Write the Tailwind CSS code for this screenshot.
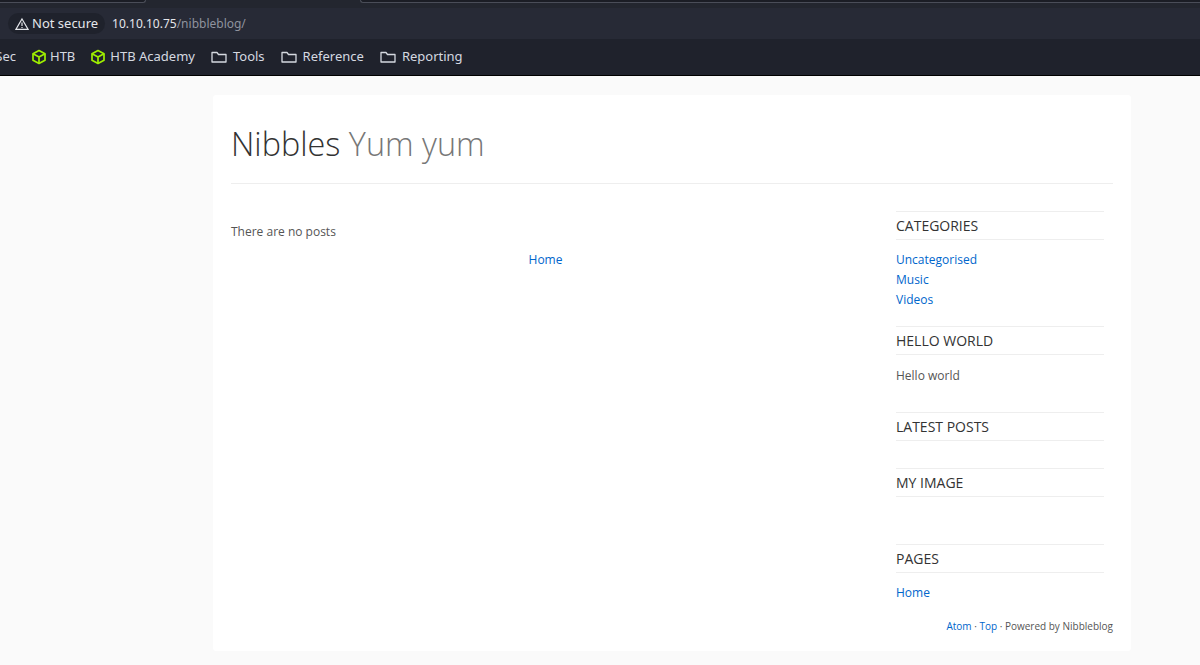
<!DOCTYPE html>
<html lang="en">
<head>
    <meta charset="UTF-8">
    <title>Nibbles - Yum yum</title>
    <script src="https://cdn.jsdelivr.net/npm/@tailwindcss/browser@4"></script>
</head>
<body class="h-[665px] overflow-hidden bg-[#fafafa] font-['Open_Sans',sans-serif]">
    <!-- browser chrome -->
    <div class="h-[76px] bg-[#1f222c] border-b border-black overflow-hidden font-['Noto_Sans',sans-serif]">
        <!-- tab strip, only the bottom edge of the tabs is in view -->
        <div class="h-[8px] bg-[#23262f] flex">
            <div class="w-[146px] h-[3px] bg-[#1b1d25] border-b border-r border-[#4a4d58] rounded-br-[6px]"></div>
            <div class="ml-[214px] flex-1 h-[3px] bg-[#1b1d25] border-b border-l border-[#4a4d58] rounded-bl-[6px]"></div>
        </div>
        <div class="h-[31px] bg-[#272a36] flex items-center pl-[8px]">
            <div class="h-[21px] rounded-full bg-[#1f222c] flex items-center gap-[3px] pl-[7px] pr-[7px] text-[13px] text-[#e4e6ea]">
                <svg class="w-[14px] h-[14px]" viewBox="0 0 14 14" fill="none" stroke="#e4e6ea" stroke-width="1.2"><path d="M7 2 L13 12.3 H1 Z"/><path d="M7 5.5 V9 M7 10 V11"/></svg>
                <span>Not secure</span>
            </div>
            <div class="ml-[7px] text-[12px] text-[#e4e6ea]">10.10.10.75<span class="text-[#8f939e]">/nibbleblog/</span></div>
        </div>
        <div class="h-[36px] flex items-center text-[13px] text-[#d5d9e0] whitespace-nowrap">
            <span class="w-[16px] flex justify-end overflow-hidden"><span>Sec</span></span>
            <svg class="ml-[15px] w-[16px] h-[16px]" viewBox="0 0 16 16" fill="none" stroke="#9fef00" stroke-width="1.7" stroke-linejoin="round"><path d="M8 1.5 L14 4.8 V11.2 L8 14.5 L2 11.2 V4.8 Z"/><path d="M2 4.8 L8 8 L14 4.8 M8 8 V14.5"/></svg>
            <span class="ml-[3px]">HTB</span>
            <svg class="ml-[15px] w-[16px] h-[16px]" viewBox="0 0 16 16" fill="none" stroke="#9fef00" stroke-width="1.7" stroke-linejoin="round"><path d="M8 1.5 L14 4.8 V11.2 L8 14.5 L2 11.2 V4.8 Z"/><path d="M2 4.8 L8 8 L14 4.8 M8 8 V14.5"/></svg>
            <span class="ml-[4px]">HTB Academy</span>
            <svg class="ml-[16px] w-[16px] h-[16px]" viewBox="0 0 16 16" fill="none" stroke="#d5d9e0" stroke-width="1.3" stroke-linejoin="round"><path d="M1 13 V3.5 H6 L7.5 5.5 H15 V13 Z"/></svg>
            <span class="ml-[6px]">Tools</span>
            <svg class="ml-[16px] w-[16px] h-[16px]" viewBox="0 0 16 16" fill="none" stroke="#d5d9e0" stroke-width="1.3" stroke-linejoin="round"><path d="M1 13 V3.5 H6 L7.5 5.5 H15 V13 Z"/></svg>
            <span class="ml-[6px]">Reference</span>
            <svg class="ml-[16px] w-[16px] h-[16px]" viewBox="0 0 16 16" fill="none" stroke="#d5d9e0" stroke-width="1.3" stroke-linejoin="round"><path d="M1 13 V3.5 H6 L7.5 5.5 H15 V13 Z"/></svg>
            <span class="ml-[6px]">Reporting</span>
        </div>
    </div>

    <!-- blog page -->
    <div class="ml-[213px] mt-[19px] w-[918px] h-[556px] bg-white rounded-[3px] px-[18px]">
        <header class="h-[89px] border-b border-[#eeeeee] flex items-end pb-[15px]">
            <h1 class="text-[32.4px] leading-[50px] font-light text-[#333333]">Nibbles <span class="text-[#777777]">Yum yum</span></h1>
        </header>
        <div class="flex">
            <main class="w-[629px] pt-[38px] text-[12px] leading-[20px]">
                <p class="text-[#555555]">There are no posts</p>
                <div class="mt-[8px] text-center"><a href="#" class="text-[#0066cc]">Home</a></div>
            </main>
            <aside class="ml-[36px] w-[208px] pt-[27px] text-[12px] leading-[20px]">
                <section class="h-[115px]">
                    <h2 class="h-[29px] border-y border-[#eeeeee] text-[14px] leading-[27px] text-[#333333]">CATEGORIES</h2>
                    <ul class="mt-[10px] text-[#0066cc]">
                        <li>Uncategorised</li>
                        <li>Music</li>
                        <li>Videos</li>
                    </ul>
                </section>
                <section class="h-[86px]">
                    <h2 class="h-[29px] border-y border-[#eeeeee] text-[14px] leading-[27px] text-[#333333]">HELLO WORLD</h2>
                    <p class="mt-[11px] text-[#555555]">Hello world</p>
                </section>
                <section class="h-[56px]">
                    <h2 class="h-[29px] border-y border-[#eeeeee] text-[14px] leading-[27px] text-[#333333]">LATEST POSTS</h2>
                </section>
                <section class="h-[76px]">
                    <h2 class="h-[29px] border-y border-[#eeeeee] text-[14px] leading-[27px] text-[#333333]">MY IMAGE</h2>
                </section>
                <section>
                    <h2 class="h-[29px] border-y border-[#eeeeee] text-[14px] leading-[27px] text-[#333333]">PAGES</h2>
                    <p class="mt-[10px] text-[#0066cc]">Home</p>
                </section>
            </aside>
        </div>
        <footer class="mt-[15px] text-right text-[10px] leading-[16px] text-[#555555]">
            <a href="#" class="text-[#0066cc]">Atom</a> · <a href="#" class="text-[#0066cc]">Top</a> · Powered by Nibbleblog
        </footer>
    </div>
</body>
</html>
